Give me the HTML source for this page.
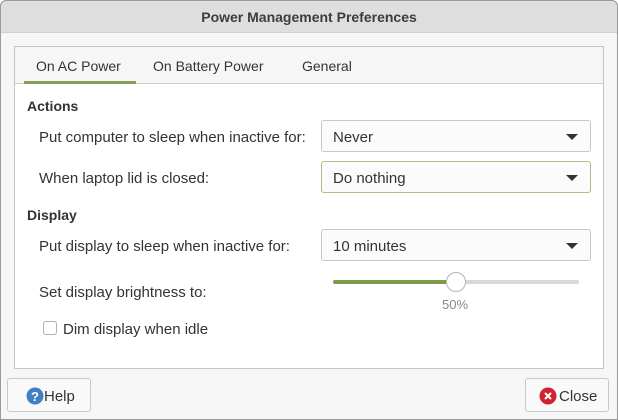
<!DOCTYPE html>
<html><head><style>
*{box-sizing:border-box;margin:0;padding:0}
body{width:618px;height:420px;overflow:hidden;background:#fff;font-family:"Liberation Sans",sans-serif;font-size:14px;color:#333}
.win{position:absolute;left:0;top:0;width:618px;height:420px;border-radius:6px 6px 0 0;background:#f6f6f6;overflow:hidden}
.bd{position:absolute;left:0;top:0;width:618px;height:420px;border:1px solid #9a9a9a;border-radius:6px 6px 0 0;pointer-events:none}
.title{position:absolute;left:0;top:0;width:618px;height:33px;background:#dedede;border-bottom:1px solid #cfcfcf;text-align:center;line-height:34px;font-weight:bold;font-size:14px;color:#3c3c3c}
.frame{position:absolute;left:14px;top:46px;width:590px;height:323px;border:1px solid #c4c4c4;background:#fff}
.tabs{position:absolute;left:0;top:0;width:588px;height:37px;background:#f6f6f6;border-bottom:1px solid #cfcfcf}
.tab{position:absolute;top:11px;font-size:14px;color:#333}
.ul{position:absolute;left:9px;top:34px;width:112px;height:3px;background:#8aa05a}
.a{position:absolute;font-size:15px;white-space:nowrap}
.b{font-weight:bold;font-size:14px}
.dd{position:absolute;left:321px;width:270px;height:32px;border:1px solid #c8c8c8;border-radius:3px;background:#fbfbfb;padding-left:11px;line-height:33px;font-size:15px}
.dd:after{content:"";position:absolute;right:12px;top:13px;border-left:6px solid transparent;border-right:6px solid transparent;border-top:6px solid #333}
.btn{position:absolute;top:378px;width:84px;height:34px;border:1px solid #c8c8c8;border-radius:3px;background:#f9f9f9;line-height:35px;font-size:15px}
</style></head><body><div class="win">
<div class="title">Power Management Preferences</div>
<div class="frame"><div class="tabs">
<span class="tab" style="left:21px">On AC Power</span>
<span class="tab" style="left:138px">On Battery Power</span>
<span class="tab" style="left:287px">General</span>
<div class="ul"></div></div></div>
<div class="a b" style="left:27px;top:98px">Actions</div>
<div class="a" style="left:39px;top:129px">Put computer to sleep when inactive for:</div>
<div class="dd" style="top:120px">Never</div>
<div class="a" style="left:39px;top:170px">When laptop lid is closed:</div>
<div class="dd" style="top:161px;border-color:#a9c08a">Do nothing</div>
<div class="a b" style="left:27px;top:207px">Display</div>
<div class="a" style="left:39px;top:238px">Put display to sleep when inactive for:</div>
<div class="dd" style="top:229px">10 minutes</div>
<div class="a" style="left:39px;top:284px">Set display brightness to:</div>
<div style="position:absolute;left:333px;top:280px;width:246px;height:4px;border-radius:2px;background:#d8d8d8"></div>
<div style="position:absolute;left:333px;top:280px;width:123px;height:4px;border-radius:2px;background:#7e9a4c"></div>
<div style="position:absolute;left:446px;top:272px;width:20px;height:20px;border-radius:50%;background:#fff;border:1px solid #b5b5b5"></div>
<div class="a" style="left:442px;top:297px;color:#888;font-size:13px">50%</div>
<div style="position:absolute;left:43px;top:321px;width:14px;height:14px;border:1px solid #b0b0b0;border-radius:3px;background:#fff"></div>
<div class="a" style="left:63px;top:321px">Dim display when idle</div>
<div class="btn" style="left:7px"><svg style="position:absolute;left:18px;top:8px" width="18" height="18"><circle cx="9" cy="9" r="8.5" fill="#3f7fc4"/><text x="9" y="14" font-size="13" font-weight="bold" fill="#fff" text-anchor="middle" font-family="Liberation Sans">?</text></svg><span style="position:absolute;left:36px">Help</span></div>
<div class="btn" style="left:525px"><svg style="position:absolute;left:13px;top:8px" width="18" height="18"><circle cx="9" cy="9" r="8.5" fill="#d0232d"/><path d="M6 6L12 12M12 6L6 12" stroke="#fff" stroke-width="2"/></svg><span style="position:absolute;left:33px">Close</span></div>
</div><div class="bd"></div></body></html>
